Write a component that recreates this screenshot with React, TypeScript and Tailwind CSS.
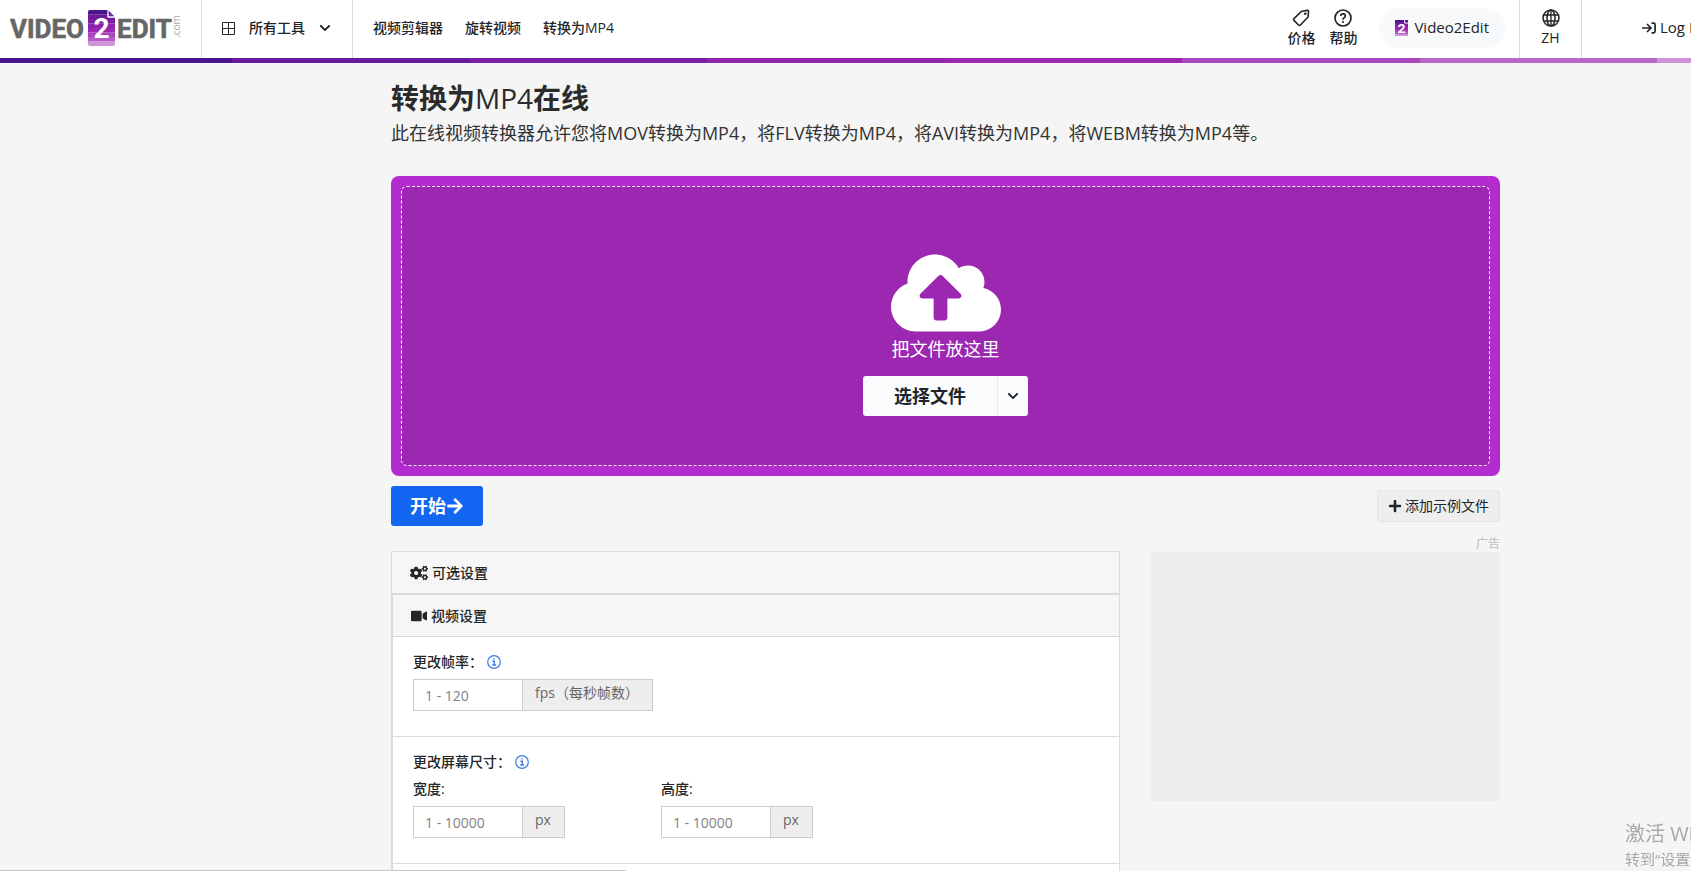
import type { ReactNode } from 'react';
import {
  FaArrowRight,
  FaChevronDown,
  FaCloudUploadAlt,
  FaCogs,
  FaPlus,
  FaVideo,
} from 'react-icons/fa';

const stripes = [
  'bg-[#4a148c]',
  'bg-[#6a1b9a]',
  'bg-[#7b1fa2]',
  'bg-[#8e24aa]',
  'bg-[#9c27b0]',
  'bg-[#ab47bc]',
  'bg-[#ba68c8]',
];

const pageBands = ['#4a148c', '#6a1b9a', '#7b1fa2', '#8e24aa', '#9c27b0', '#ab47bc', '#b65cc6', '#ce93d8'];

const navLinks = ['视频剪辑器', '旋转视频', '转换为MP4'];

function PageMark() {
  return (
    <>
      {pageBands.map((fill, i) => (
        <rect key={fill} x="0" y={i * 4.5} width="27" height="4.6" fill={fill} />
      ))}
    </>
  );
}

function Logo() {
  return (
    <svg width="174" height="40" viewBox="0 0 174 40" role="img" aria-label="Video2Edit">
      <defs>
        <clipPath id="page">
          <path d="M2 0H20L27 7V34Q27 36 25 36H2Q0 36 0 34V2Q0 0 2 0Z" />
        </clipPath>
      </defs>
      <g fill="#666" stroke="#666" strokeWidth="0.6" fontFamily="Roboto, sans-serif" fontWeight="700" fontSize="26">
        <text x="0" y="29">VIDEO</text>
        <text x="107" y="29">EDIT</text>
      </g>
      <g transform="translate(78 1)">
        <g clipPath="url(#page)">
          <PageMark />
        </g>
        <path d="M20 0V7H27" fill="none" stroke="#fff" strokeWidth="1.3" />
        <text x="13.5" y="28" textAnchor="middle" fill="#fff" fontFamily="Roboto, sans-serif" fontWeight="700" fontSize="28">2</text>
      </g>
      <text transform="translate(170 29) rotate(-90)" fill="#aaa" fontFamily="'Open Sans', sans-serif" fontSize="10">.com</text>
    </svg>
  );
}

function SmallMark() {
  return (
    <svg width="13" height="16" viewBox="0 0 27 36" preserveAspectRatio="none" aria-hidden="true">
      <PageMark />
      <path d="M20 0V7H27" fill="none" stroke="#fff" strokeWidth="2" />
      <text x="13.5" y="30" textAnchor="middle" fill="#fff" fontFamily="Roboto, sans-serif" fontWeight="700" fontSize="29">2</text>
    </svg>
  );
}

function TagIcon() {
  return (
    <svg width="18" height="18" viewBox="0 0 18 18" fill="none" stroke="currentColor" strokeWidth="1.6" strokeLinejoin="round" aria-hidden="true">
      <path d="M10.2 2.2L15.2 1.4Q16.6 1.3 16.5 2.7L16.1 7.4Q16 8 15.6 8.5L8.4 16Q7.5 16.8 6.6 16L1.9 11.4Q1.1 10.5 2 9.6L9 2.8Q9.5 2.3 10.2 2.2Z" />
      <circle cx="13.3" cy="4.7" r="1.3" fill="currentColor" stroke="none" />
    </svg>
  );
}

function HelpIcon() {
  return (
    <svg width="18" height="18" viewBox="0 0 18 18" fill="none" stroke="currentColor" strokeWidth="1.7" aria-hidden="true">
      <circle cx="9" cy="9" r="8" />
      <path d="M6.7 7Q6.8 4.8 9 4.8Q11.3 4.8 11.3 6.8Q11.3 8 10.1 8.7Q9 9.4 9 10.7" />
      <circle cx="9" cy="13" r="1.1" fill="currentColor" stroke="none" />
    </svg>
  );
}

function GlobeIcon() {
  return (
    <svg width="18" height="18" viewBox="0 0 18 18" fill="none" stroke="currentColor" strokeWidth="1.5" aria-hidden="true">
      <circle cx="9" cy="9" r="8" />
      <ellipse cx="9" cy="9" rx="4" ry="8" />
      <path d="M9 1V17M1.8 6H16.2M1.8 12H16.2" strokeWidth="1.3" />
    </svg>
  );
}

function InfoIcon() {
  return (
    <svg width="14" height="14" viewBox="0 0 14 14" fill="none" stroke="#3b7be0" strokeWidth="1.2" aria-hidden="true">
      <circle cx="7" cy="7" r="6.3" />
      <path d="M5.4 6.2H7.3V10M5.2 10H9M6.3 3.9H7.8" strokeWidth="1.4" />
    </svg>
  );
}

function LoginIcon() {
  return (
    <svg width="14" height="12" viewBox="0 0 14 12" fill="none" stroke="currentColor" strokeWidth="1.7" className="shrink-0" aria-hidden="true">
      <path d="M0 6H8.5M5 2L9 6L5 10M9.5 1.2H11.5Q13.1 1.2 13.1 2.8V9.2Q13.1 10.8 11.5 10.8H9.5" />
    </svg>
  );
}

function IconLink({ icon, label }: { icon: ReactNode; label: string }) {
  return (
    <a href="#" className="flex flex-col items-center gap-0.5">
      {icon}
      <span className="leading-[18px]">{label}</span>
    </a>
  );
}

function Header() {
  return (
    <header className="overflow-hidden bg-white">
      <div className="flex h-[58px] items-stretch text-sm font-medium whitespace-nowrap text-[#212529]">
        <a href="#" className="flex w-[202px] shrink-0 items-center border-r border-[#dcdce0] pl-2.5">
          <Logo />
        </a>
        <button type="button" className="flex w-[151px] shrink-0 items-center border-r border-[#dcdce0] pb-0.5 pl-5">
          <svg width="13" height="13" viewBox="0 0 13 13" fill="none" stroke="currentColor" aria-hidden="true">
            <path d="M.5.5H12.5V12.5H.5ZM6.5.5V12.5M.5 6.5H12.5" />
          </svg>
          <span className="mr-3.5 ml-3.5">所有工具</span>
          <FaChevronDown size={12} />
        </button>
        <nav className="flex items-center gap-[22px] pb-0.5 pl-5">
          {navLinks.map((label) => (
            <a key={label} href="#">{label}</a>
          ))}
        </nav>
        <div className="ml-auto flex shrink-0 items-stretch">
          <div className="flex items-center gap-3.5 pb-0.5">
            <IconLink icon={<TagIcon />} label="价格" />
            <IconLink icon={<HelpIcon />} label="帮助" />
          </div>
          <a href="#" className="mr-3.5 mb-0.5 ml-[22px] flex h-10 items-center gap-1.5 self-center rounded-full bg-[#f8f9fb] px-4 text-[15px] font-normal">
            <SmallMark />
            Video2Edit
          </a>
          <div className="flex w-[63px] items-center justify-center border-x border-[#dcdce0] pb-0.5">
            <IconLink icon={<GlobeIcon />} label="ZH" />
          </div>
          <a href="#" className="flex w-[109px] items-center gap-1 pb-0.5 pl-[60px] text-[15px] font-normal">
            <LoginIcon />
            <span>Log In</span>
          </a>
        </div>
      </div>
      <div className="-ml-[5px] flex h-[5px]">
        {stripes.map((color) => (
          <div key={color} className={`w-[14%] shrink-0 ${color}`} />
        ))}
        <div className="flex-1 bg-[#ce93d8]" />
      </div>
    </header>
  );
}

function DropZone() {
  return (
    <div className="mt-[29px] rounded-lg bg-[#b42bcf] p-2.5">
      <div className="flex h-[280px] flex-col items-center rounded-md border border-dashed border-white bg-[#9c27b0] pt-[62px] text-white">
        <FaCloudUploadAlt className="h-[88px] w-[110px]" />
        <p className="text-lg leading-6">把文件放这里</p>
        <div className="mt-[15px] flex h-10 overflow-hidden rounded-[3px] bg-[#f9fbfc] text-[#212529]">
          <button type="button" className="w-[135px] border-r border-[#e9ecef] text-lg font-bold">选择文件</button>
          <button type="button" aria-label="更多来源" className="flex w-[30px] items-center justify-center">
            <FaChevronDown size={12} />
          </button>
        </div>
      </div>
    </div>
  );
}

function SectionHeader({ icon, title }: { icon: ReactNode; title: string }) {
  return (
    <h2 className="flex h-[42px] items-center gap-1 border-b border-[#d6d6d6] bg-[#f6f6f6] pl-[18px] text-sm font-medium text-[#262626]">
      {icon}
      {title}
    </h2>
  );
}

type FieldProps = { id: string; placeholder: string; unit: string };

function NumberField({ id, placeholder, unit }: FieldProps) {
  return (
    <div className="flex h-8 w-max border border-[#cccccc] text-sm">
      <input
        id={id}
        type="text"
        placeholder={placeholder}
        className="w-[108px] bg-white px-[11px] pt-0.5 placeholder:text-[#808080]"
      />
      <span className="border-l border-[#cccccc] bg-[#eeeeee] pr-[13px] pl-3 leading-[26px] text-[#666666]">{unit}</span>
    </div>
  );
}

function Settings() {
  return (
    <section className="min-w-0 flex-1 border border-b-0 border-[#dcdcdc] bg-white text-sm text-[#262626]">
      <SectionHeader icon={<FaCogs size={18} />} title="可选设置" />
      <div className="border-t border-l border-[#dcdcdc]">
        <SectionHeader icon={<FaVideo size={16} />} title="视频设置" />
        <div className="h-[100px] border-b border-[#dcdcdc] px-5 pt-[15px]">
          <label htmlFor="fps" className="flex h-5 items-center gap-1 font-medium">
            更改帧率：
            <InfoIcon />
          </label>
          <div className="mt-[7px]">
            <NumberField id="fps" placeholder="1 - 120" unit="fps（每秒帧数）" />
          </div>
        </div>
        <div className="h-[127px] border-b border-[#dcdcdc] px-5 pt-[15px]">
          <p className="flex h-5 items-center gap-1 font-medium">
            更改屏幕尺寸：
            <InfoIcon />
          </p>
          <div className="mt-[7px] flex gap-24">
            <div>
              <label htmlFor="width" className="mb-[7px] block leading-5 font-medium">宽度:</label>
              <NumberField id="width" placeholder="1 - 10000" unit="px" />
            </div>
            <div>
              <label htmlFor="height" className="mb-[7px] block leading-5 font-medium">高度:</label>
              <NumberField id="height" placeholder="1 - 10000" unit="px" />
            </div>
          </div>
        </div>
        <div className="h-[7px]" />
      </div>
    </section>
  );
}

export default function App() {
  return (
    <div className="min-h-screen overflow-hidden bg-[#f5f5f5] font-['Open_Sans','Noto_Sans_CJK_SC',sans-serif]">
      <Header />
      <main className="pt-4 pr-[191px] pl-[391px]">
        <h1 className="text-[28px] leading-[38px] font-bold text-[#2b2b2b]">
          转换为<span className="font-medium">MP4</span>在线
        </h1>
        <p className="mt-[3px] text-lg leading-[27px] text-[#333333]">
          此在线视频转换器允许您将MOV转换为MP4，将FLV转换为MP4，将AVI转换为MP4，将WEBM转换为MP4等。
        </p>
        <DropZone />
        <div className="mt-2.5 flex items-center justify-between">
          <button type="button" className="flex h-10 items-center rounded-[3px] bg-[#1266f1] px-[19px] text-lg font-bold text-white">
            开始
            <FaArrowRight size={18} />
          </button>
          <button type="button" className="flex h-8 items-center gap-[3px] rounded-[3px] border border-[#e2e4e6] bg-[#eeeeee] px-2.5 text-sm text-[#212529]">
            <FaPlus size={14} />
            添加示例文件
          </button>
        </div>
        <div className="flex items-start gap-[30px] pt-[25px]">
          <Settings />
          <aside className="-mt-[15px] w-[350px] shrink-0">
            <p className="text-right text-xs leading-4 text-[#bdbdbd]">广告</p>
            <div className="h-[249px] bg-[#eeeeee]" />
          </aside>
        </div>
      </main>
      <div className="fixed right-0 bottom-0 w-[66px] overflow-hidden whitespace-nowrap text-[#a8a8a8]">
        <p className="text-xl leading-[26px]">激活 Windows</p>
        <p className="text-[15px] leading-6">转到“设置”以激活 Windows。</p>
      </div>
      <div className="fixed bottom-0 left-0 h-px w-[37%] bg-[#c8c8c8]" />
    </div>
  );
}
